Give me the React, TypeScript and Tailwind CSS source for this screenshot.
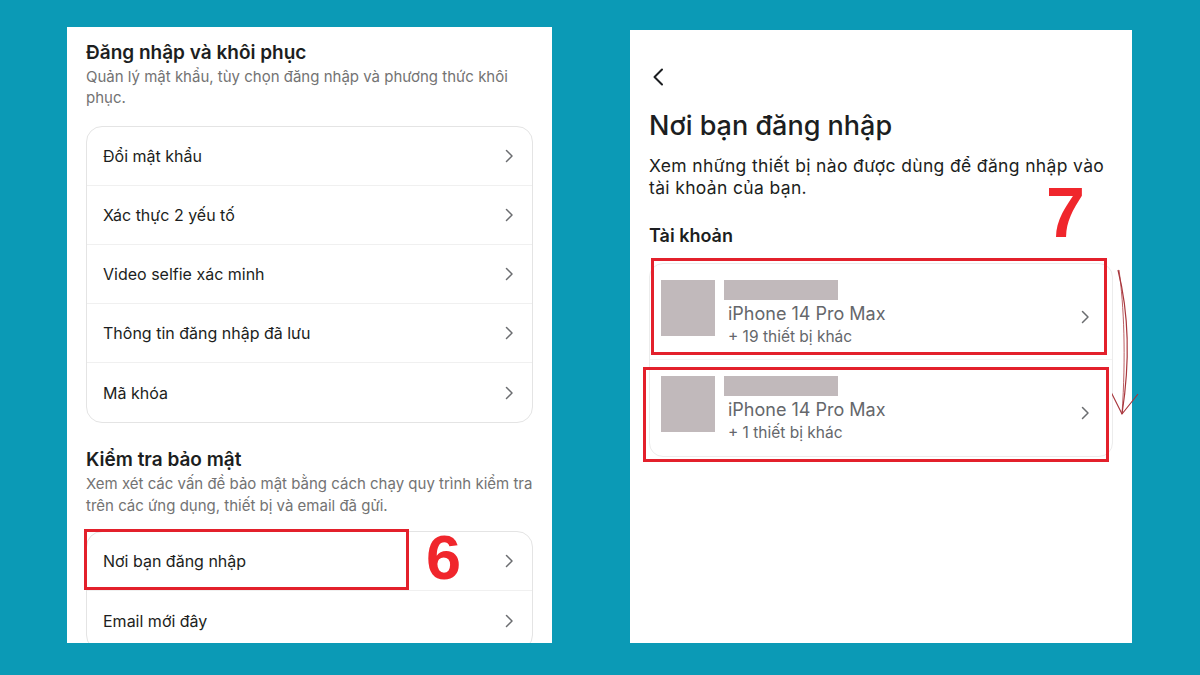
import React from "react";

const font = { fontFamily: "Inter, 'Noto Sans', sans-serif" };
const bigDigit = { fontFamily: "'Liberation Sans', Arial, sans-serif" };

function Chevron({ className = "" }: { className?: string }) {
  return (
    <svg width="9" height="14" viewBox="0 0 9 14" className={className}>
      <path d="M1.5 1.5 L7 7 L1.5 12.5" fill="none" stroke="#6b6d70" strokeWidth="1.5" strokeLinecap="round" strokeLinejoin="round" />
    </svg>
  );
}

function Row({ label, last = false, children }: { label: string; last?: boolean; children?: React.ReactNode }) {
  return (
    <div className={`relative flex h-[59px] items-center justify-between pl-[16px] pr-[18px] ${last ? "" : "border-b border-[#f0f0f0]"}`}>
      <span className="text-[16px] text-[#1c1e21]">{label}</span>
      <Chevron />
      {children}
    </div>
  );
}

function DeviceRow({ device, more, last = false }: { device: string; more: string; last?: boolean }) {
  return (
    <div className={`flex h-[96px] items-start pl-[11px] pr-[22px] pt-[16px] ${last ? "" : "border-b border-[#f3f3f3]"}`}>
      <div className="h-[56px] w-[54px] bg-[#c1b9bb]" />
      <div className="ml-[9px] flex flex-1 flex-col">
        <div className="h-[20px] w-[114px] bg-[#c1b9bb]" />
        <span className="ml-[4px] mt-[3px] text-[18px] leading-[22px] text-[#65676b]">{device}</span>
        <span className="ml-[4px] mt-[1px] text-[15.5px] leading-[22px] text-[#65676b]">{more}</span>
      </div>
      <Chevron className="mt-[30px]" />
    </div>
  );
}

export default function App() {
  return (
    <div className="flex h-[675px] w-[1200px] items-start overflow-hidden bg-[#0b9ab6] pl-[67px]" style={font}>
      {/* security settings screen */}
      <div className="mt-[27px] h-[616px] w-[485px] overflow-hidden bg-white px-[19px] pt-[13px]">
        <h2 className="text-[19px] font-semibold leading-[26px] text-[#1c1e21]">Đăng nhập và khôi phục</h2>
        <p className="text-[15px] leading-[21px] text-[#737373]">
          Quản lý mật khẩu, tùy chọn đăng nhập và phương thức khôi phục.
        </p>
        <div className="mt-[18px] overflow-hidden rounded-[16px] border border-[#e4e4e4]">
          <Row label="Đổi mật khẩu" />
          <Row label="Xác thực 2 yếu tố" />
          <Row label="Video selfie xác minh" />
          <Row label="Thông tin đăng nhập đã lưu" />
          <Row label="Mã khóa" last />
        </div>

        <h2 className="mt-[24px] text-[19px] font-semibold leading-[26px] text-[#1c1e21]">Kiểm tra bảo mật</h2>
        <p className="text-[15px] leading-[22px] text-[#737373]">
          Xem xét các vấn đề bảo mật bằng cách chạy quy trình kiểm tra trên các ứng dụng, thiết bị và email đã gửi.
        </p>
        <div className="relative mt-[14px] rounded-[16px] border border-[#e4e4e4]">
          <Row label="Nơi bạn đăng nhập">
            <div className="absolute left-[-3px] top-[-3px] h-[61px] w-[325px] border-[3px] border-[#e3202b]" />
            <span className="absolute left-[339px] top-[-6px] text-[63px] font-bold leading-none text-[#f0262c]" style={bigDigit}>
              6
            </span>
          </Row>
          <Row label="Email mới đây" last />
        </div>
      </div>

      {/* login locations screen */}
      <div className="relative ml-[78px] mt-[30px] h-[613px] w-[502px] bg-white px-[19px] pt-[38px]">
        <svg width="14" height="18" viewBox="0 0 14 18" className="ml-[2px]">
          <path d="M11 1.5 L3.5 9 L11 16.5" fill="none" stroke="#1c1e21" strokeWidth="2" strokeLinecap="round" strokeLinejoin="round" />
        </svg>
        <h1 className="mt-[22px] text-[27px] font-medium leading-[36px] text-[#1c1e21]">Nơi bạn đăng nhập</h1>
        <p className="mt-[11px] text-[17.5px] leading-[22px] tracking-[0.35px] text-[#1c1e21]">
          Xem những thiết bị nào được dùng để đăng nhập vào
          <br />
          tài khoản của bạn.
        </p>
        <h3 className="mt-[26px] text-[18px] font-semibold leading-[22px] text-[#1c1e21]">Tài khoản</h3>
        <div className="relative mt-[16px] w-[464px] rounded-[14px] border border-[#ececec]">
          <DeviceRow device="iPhone 14 Pro Max" more="+ 19 thiết bị khác" />
          <DeviceRow device="iPhone 14 Pro Max" more="+ 1 thiết bị khác" last />
          <div className="absolute left-[1px] top-[-6px] h-[97px] w-[456px] border-[3px] border-[#e3202b]" />
          <div className="absolute left-[-7px] top-[103px] h-[95px] w-[466px] border-[3px] border-[#e3202b]" />
          <svg width="30" height="160" viewBox="0 0 30 160" className="absolute left-[462px] top-[2px]">
            <path d="M6 4 C15 40 19 90 10 148" fill="none" stroke="#a8363c" strokeWidth="1.2" />
            <path d="M7 4 C12 40 14 90 10 148" fill="none" stroke="#a8363c" strokeWidth="0.8" />
            <path d="M-2 124 L10 148 L26 128" fill="none" stroke="#a8363c" strokeWidth="1.2" />
          </svg>
        </div>
        <span className="absolute left-[416px] top-[148px] text-[70px] font-bold leading-none text-[#f0262c]" style={bigDigit}>
          7
        </span>
      </div>
    </div>
  );
}
